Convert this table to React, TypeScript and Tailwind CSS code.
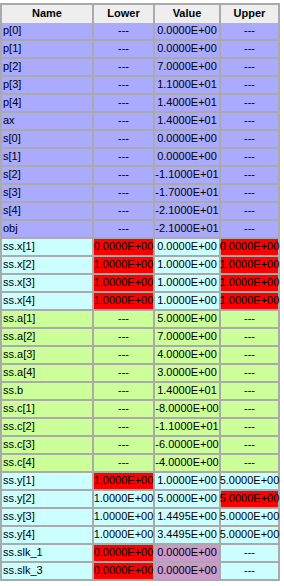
const P = "bg-[#aaaaff]"
const C = "bg-[#ccffff]"
const G = "bg-[#ccff99]"
const RED = "bg-[#ff0000]"
const MAUVE = "bg-[#cc99cc]"

type Row = {
    name: string
    bg: string
    lower: string
    value: string
    upper: string
    lowerBg?: string
    valueBg?: string
    upperBg?: string
}

const D = "---"

const rows: Row[] = [
    { name: "p[0]", bg: P, lower: D, value: "0.0000E+00", upper: D },
    { name: "p[1]", bg: P, lower: D, value: "0.0000E+00", upper: D },
    { name: "p[2]", bg: P, lower: D, value: "7.0000E+00", upper: D },
    { name: "p[3]", bg: P, lower: D, value: "1.1000E+01", upper: D },
    { name: "p[4]", bg: P, lower: D, value: "1.4000E+01", upper: D },
    { name: "ax", bg: P, lower: D, value: "1.4000E+01", upper: D },
    { name: "s[0]", bg: P, lower: D, value: "0.0000E+00", upper: D },
    { name: "s[1]", bg: P, lower: D, value: "0.0000E+00", upper: D },
    { name: "s[2]", bg: P, lower: D, value: "-1.1000E+01", upper: D },
    { name: "s[3]", bg: P, lower: D, value: "-1.7000E+01", upper: D },
    { name: "s[4]", bg: P, lower: D, value: "-2.1000E+01", upper: D },
    { name: "obj", bg: P, lower: D, value: "-2.1000E+01", upper: D },
    { name: "ss.x[1]", bg: C, lower: "0.0000E+00", value: "0.0000E+00", upper: "0.0000E+00", lowerBg: RED, upperBg: RED },
    { name: "ss.x[2]", bg: C, lower: "1.0000E+00", value: "1.0000E+00", upper: "1.0000E+00", lowerBg: RED, upperBg: RED },
    { name: "ss.x[3]", bg: C, lower: "1.0000E+00", value: "1.0000E+00", upper: "1.0000E+00", lowerBg: RED, upperBg: RED },
    { name: "ss.x[4]", bg: C, lower: "1.0000E+00", value: "1.0000E+00", upper: "1.0000E+00", lowerBg: RED, upperBg: RED },
    { name: "ss.a[1]", bg: G, lower: D, value: "5.0000E+00", upper: D },
    { name: "ss.a[2]", bg: G, lower: D, value: "7.0000E+00", upper: D },
    { name: "ss.a[3]", bg: G, lower: D, value: "4.0000E+00", upper: D },
    { name: "ss.a[4]", bg: G, lower: D, value: "3.0000E+00", upper: D },
    { name: "ss.b", bg: G, lower: D, value: "1.4000E+01", upper: D },
    { name: "ss.c[1]", bg: G, lower: D, value: "-8.0000E+00", upper: D },
    { name: "ss.c[2]", bg: G, lower: D, value: "-1.1000E+01", upper: D },
    { name: "ss.c[3]", bg: G, lower: D, value: "-6.0000E+00", upper: D },
    { name: "ss.c[4]", bg: G, lower: D, value: "-4.0000E+00", upper: D },
    { name: "ss.y[1]", bg: C, lower: "1.0000E+00", value: "1.0000E+00", upper: "5.0000E+00", lowerBg: RED },
    { name: "ss.y[2]", bg: C, lower: "1.0000E+00", value: "5.0000E+00", upper: "5.0000E+00", upperBg: RED },
    { name: "ss.y[3]", bg: C, lower: "1.0000E+00", value: "1.4495E+00", upper: "5.0000E+00" },
    { name: "ss.y[4]", bg: C, lower: "1.0000E+00", value: "3.4495E+00", upper: "5.0000E+00" },
    { name: "ss.slk_1", bg: C, lower: "0.0000E+00", value: "0.0000E+00", upper: D, lowerBg: RED, valueBg: MAUVE },
    { name: "ss.slk_3", bg: C, lower: "0.0000E+00", value: "0.0000E+00", upper: D, lowerBg: RED, valueBg: MAUVE },
]

export default function App() {
    return (
        <div className="bg-white min-h-screen" style={{ fontFamily: '"Liberation Sans", Arial, sans-serif' }}>
            <div className="inline-grid grid-cols-[90px_59px_64px_57px] auto-rows-[16px] gap-[2px] p-[2px] bg-[#aaaaaa] text-[11px] leading-none text-black">
                {/* header */}
                {["Name", "Lower", "Value", "Upper"].map((h) => (
                    <div key={h} className="h-[18px] flex items-center justify-center bg-[#eeeeee] font-bold">
                        {h}
                    </div>
                ))}

                {rows.map((r) => (
                    <Cells key={r.name} row={r} />
                ))}
            </div>
        </div>
    )
}

function Cells({ row }: { row: Row }) {
    return (
        <>
            <div className={`flex items-center pl-[1px] ${row.bg}`}>{row.name}</div>
            <div className={`flex items-center justify-center ${row.lowerBg ?? row.bg}`}>{row.lower}</div>
            <div className={`flex items-center justify-center ${row.valueBg ?? row.bg}`}>{row.value}</div>
            <div className={`flex items-center justify-center ${row.upperBg ?? row.bg}`}>{row.upper}</div>
        </>
    )
}
